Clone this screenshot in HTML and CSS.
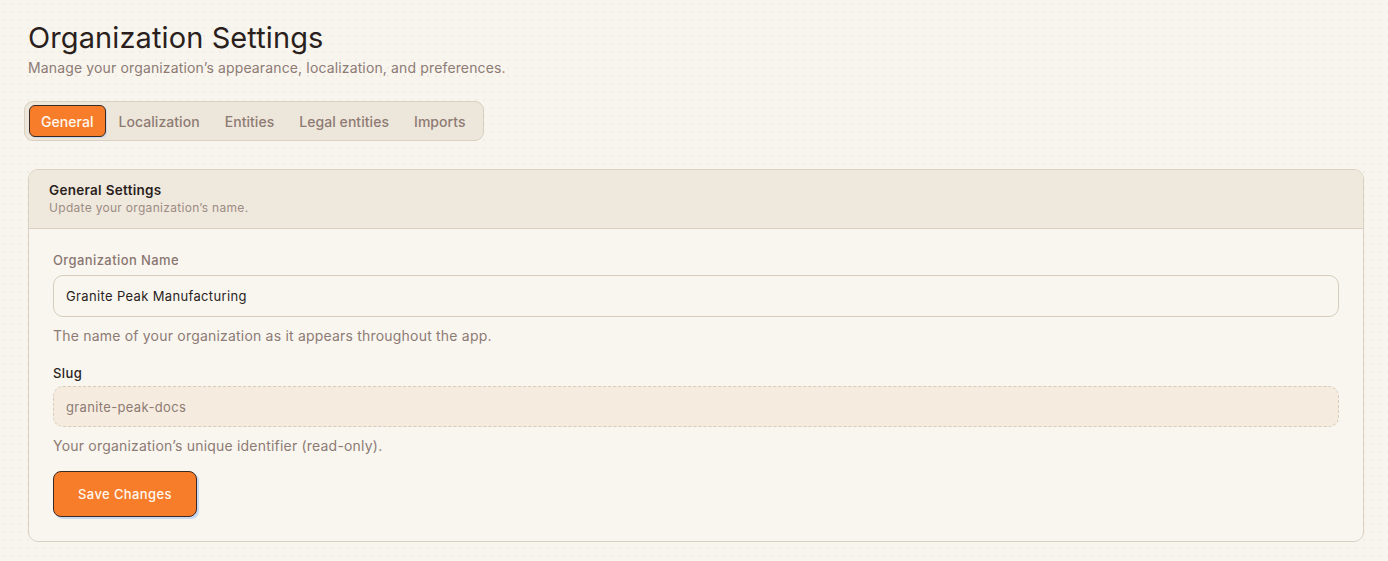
FILE: index.html
```html
<!DOCTYPE html>
<html lang="en">
<head>
<meta charset="utf-8">
<title>Organization Settings</title>
<link rel="stylesheet" href="styles.css">
</head>
<body>
<main class="page">
  <header class="page-head">
    <h1 class="title">Organization Settings</h1>
    <p class="subtitle">Manage your organization’s appearance, localization, and preferences.</p>
  </header>
  <nav class="tabs">
    <button class="tab active">General</button>
    <button class="tab">Localization</button>
    <button class="tab">Entities</button>
    <button class="tab">Legal entities</button>
    <button class="tab">Imports</button>
  </nav>
  <section class="card">
    <div class="card-head">
      <h2 class="card-title">General Settings</h2>
      <p class="card-sub">Update your organization’s name.</p>
    </div>
    <div class="card-body">
      <div class="field">
        <label class="label">Organization Name</label>
        <div class="input">Granite Peak Manufacturing</div>
        <p class="help">The name of your organization as it appears throughout the app.</p>
      </div>
      <div class="field last">
        <label class="label dark">Slug</label>
        <div class="input readonly">granite-peak-docs</div>
        <p class="help">Your organization’s unique identifier (read-only).</p>
      </div>
      <button class="save">Save Changes</button>
    </div>
  </section>
</main>
</body>
</html>
```
FILE: styles.css
```css
* { box-sizing: border-box; }
html, body { margin: 0; padding: 0; }
body {
  background-color: #f8f5ef;
  background-image: radial-gradient(circle, rgba(170,150,120,0.1) 0.8px, transparent 1px);
  background-size: 8px 8px;
  font-family: "Inter", "Liberation Sans", sans-serif;
  color: #2a1f1c;
  min-height: 561px;
}
.page { padding: 20px 25px 0 28px; }
.page-head { margin: 0; }
.title {
  margin: 0;
  font-size: 29px;
  font-weight: 400;
  line-height: 36px;
  letter-spacing: 0.1px;
  color: #2a1f1c;
}
.subtitle {
  margin: 2px 0 0;
  font-size: 14px;
  line-height: 20px;
  letter-spacing: 0.14px;
  color: #8d7b74;
}
.tabs {
  display: inline-flex;
  align-items: center;
  margin: 23px 0 0 -4px;
  padding: 3px 4px;
  background: #ede6da;
  border: 1px solid #d9d0c1;
  border-radius: 9px;
  height: 40px;
}
.tab {
  font-family: inherit;
  font-size: 14px;
  font-weight: 500;
  letter-spacing: 0.05px;
  color: #8d7b74;
  background: transparent;
  border: 1px solid transparent;
  border-radius: 6px;
  height: 32px;
  padding: 0 11px;
  margin-right: 1px;
  cursor: pointer;
}
.tab.active {
  background: #f77d2b;
  color: #fff8f0;
  border-color: #3b2a22;
  box-shadow: 1px 1px 0 #c9d9f0;
}
.card {
  margin-top: 28px;
  background: #f9f6f0;
  border: 1px solid #d9d0c1;
  border-radius: 10px;
  overflow: hidden;
  width: 1336px;
}
.card-head {
  background: #efe8dd;
  border-bottom: 1px solid #d9d0c1;
  padding: 12px 20px 12px 20px;
  height: 59px;
}
.card-title {
  margin: 0;
  font-size: 13.5px;
  font-weight: 600;
  line-height: 17px;
  letter-spacing: 0.3px;
  color: #2a1f1c;
}
.card-sub {
  margin: 1px 0 0;
  font-size: 12px;
  line-height: 15px;
  letter-spacing: 0.3px;
  color: #9c8c84;
}
.card-body { padding: 23px 24px 24px 24px; }
.field { margin-bottom: 20px; }
.field.last { margin-bottom: 16px; }
.label {
  display: block;
  font-size: 13px;
  font-weight: 500;
  line-height: 17px;
  letter-spacing: 0.4px;
  color: #8a7670;
  margin-bottom: 6px;
}
.label.dark { color: #2a1f1c; margin-bottom: 4px; }
.input {
  height: 42px;
  border: 1px solid #d6ccbc;
  border-radius: 10px;
  padding: 0 12px;
  display: flex;
  align-items: center;
  font-size: 13px;
  letter-spacing: 0.35px;
  color: #2a1f1c;
  background: transparent;
}
.input.readonly {
  background: #f5ecdf;
  border: 1px dashed #d6ccbc;
  color: #8d7b74;
  height: 41px;
}
.help {
  margin: 10px 0 0;
  font-size: 14px;
  line-height: 18px;
  letter-spacing: 0.2px;
  color: #8d7b74;
}
.save {
  margin: 0;
  display: block;
  font-family: inherit;
  font-size: 13px;
  font-weight: 500;
  letter-spacing: 0.4px;
  color: #fff8f0;
  background: #f77d2b;
  border: 1px solid #3b2a22;
  border-radius: 8px;
  height: 46px;
  width: 144px;
  box-shadow: 2px 2px 0 #c9d9f0;
  cursor: pointer;
}
```
